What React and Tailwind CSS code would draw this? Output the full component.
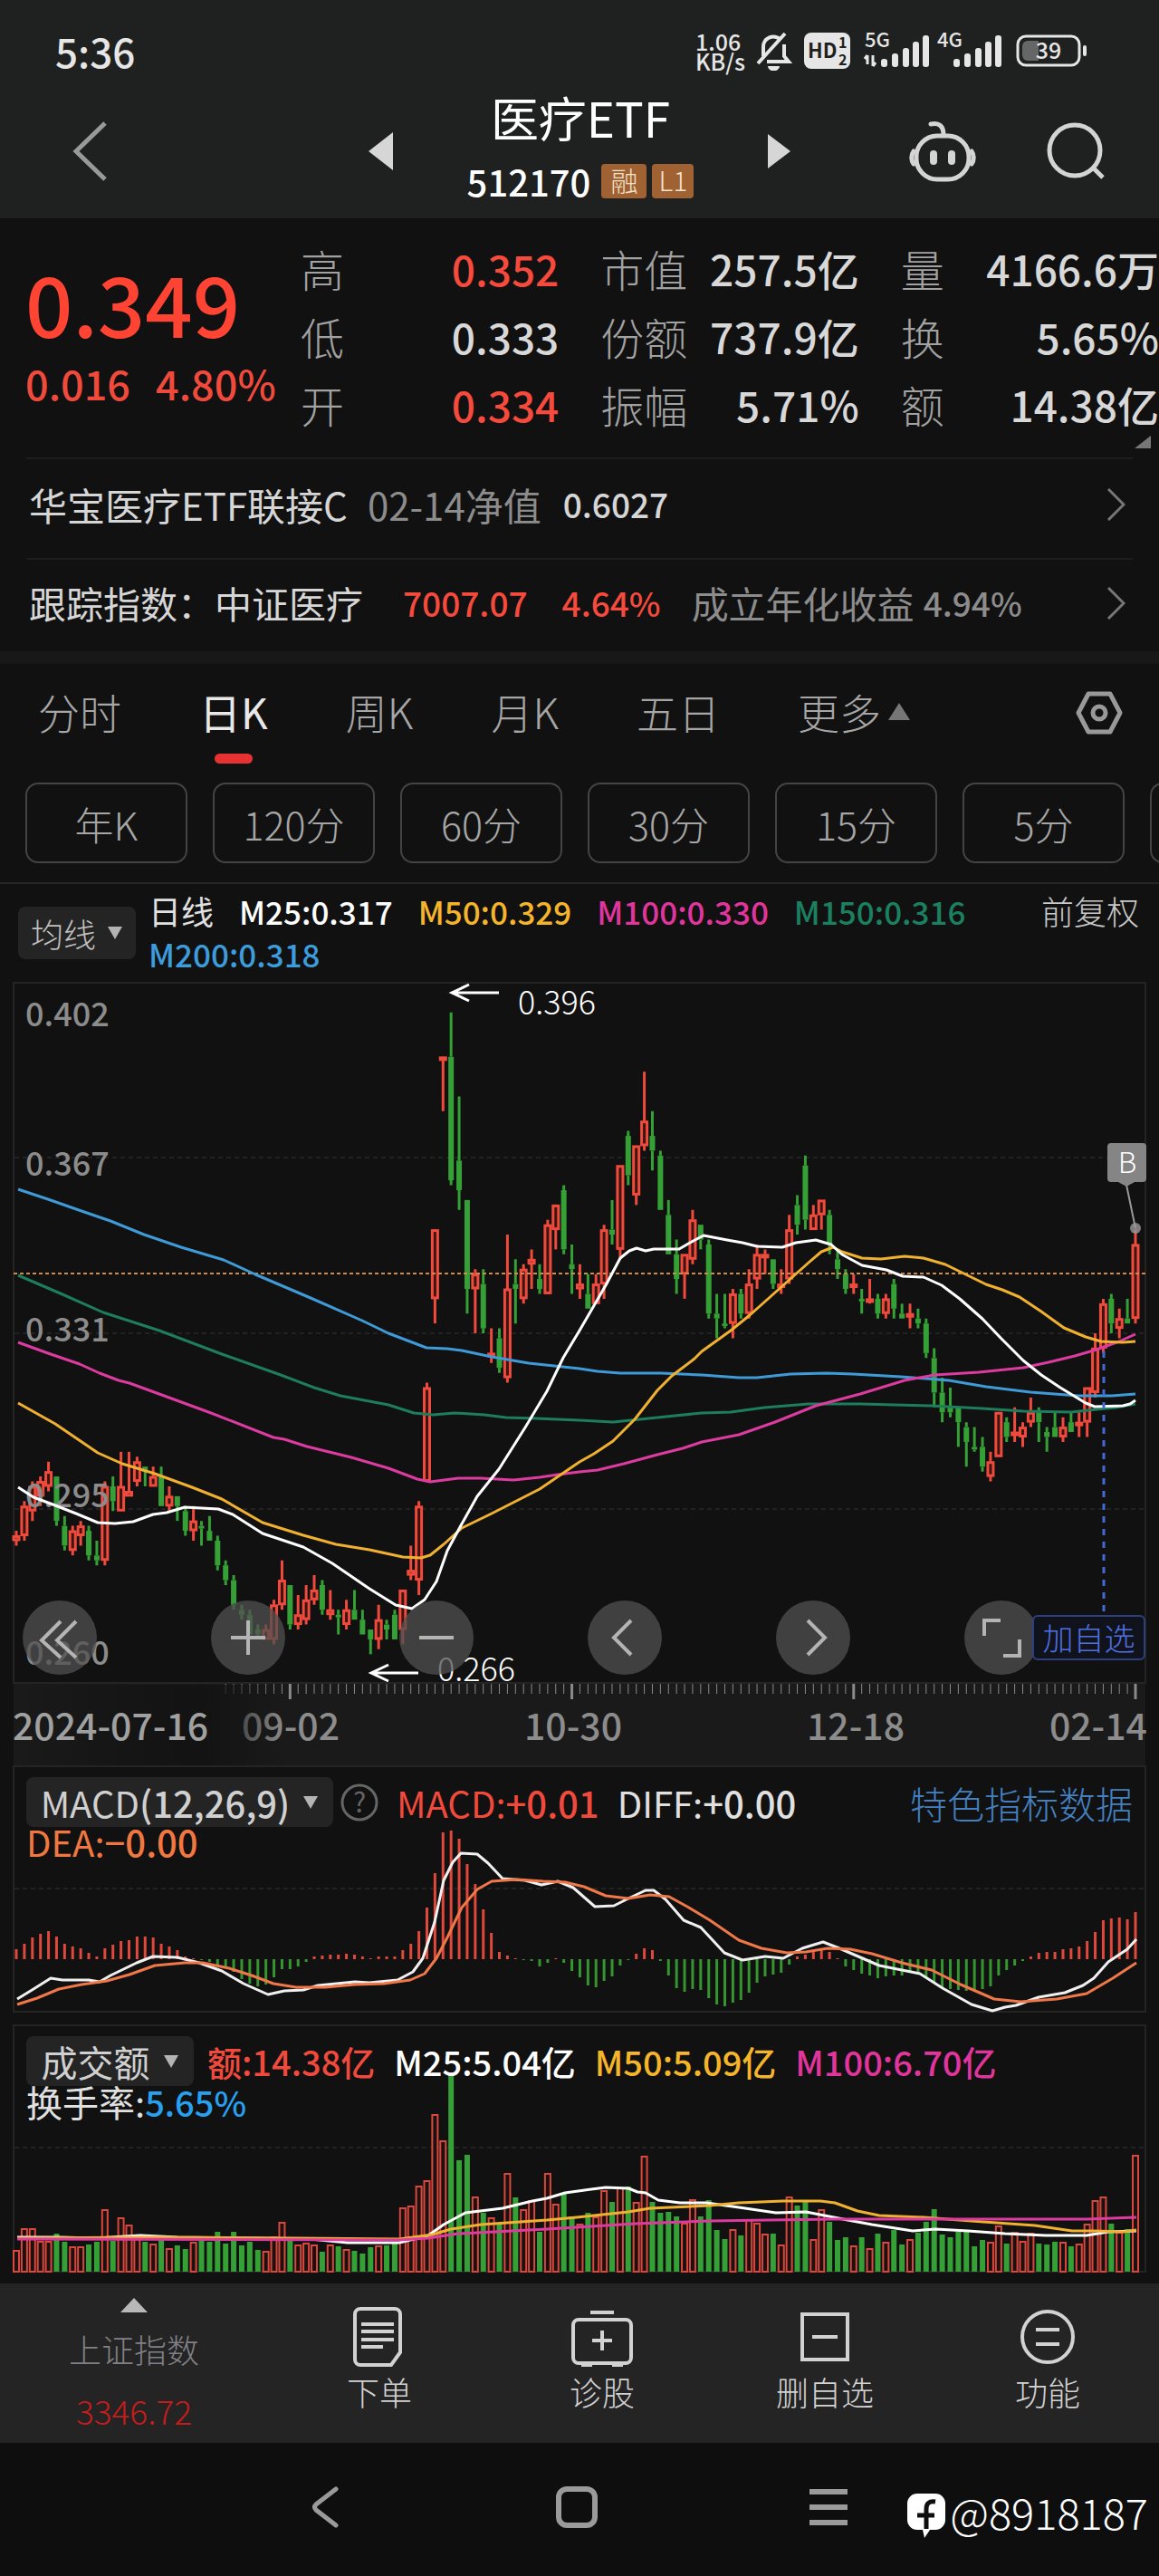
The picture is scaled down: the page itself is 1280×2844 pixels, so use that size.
const RED = '#f04a3c';
const GREEN = '#35a035';

const STEP = 1236 / 139;
const FIRST_X = 18;
const xOf = (i) => FIRST_X + i * STEP;

// price in 1/1000, top of the chart is 402
const yOf = (p) => (402.2 - p) * 5.45;

// [high, bodyTop, bodyBottom, low, up?]
const candles = [
  [291, 290, 289, 288, 1], [297, 296, 290, 289, 1], [301, 300, 295, 293, 1], [302, 301, 298, 296, 1], [305, 303, 300, 299, 1],
  [302, 302, 293, 292, 0], [294, 292, 288, 287, 0], [292, 291, 287, 286, 1], [293, 292, 290, 288, 1], [292, 291, 286, 285, 0],
  [289, 286, 285, 284, 0], [301, 300, 285, 284, 1], [302, 300, 297, 295, 0], [307, 300, 295, 295, 1], [307, 299, 298, 298, 1],
  [306, 305, 301, 300, 1], [304, 304, 303, 300, 0], [304, 302, 300, 300, 1], [304, 302, 296, 296, 0], [300, 298, 296, 295, 1],
  [298, 298, 296, 293, 0], [296, 295, 291, 290, 0], [296, 293, 291, 289, 1], [293, 292, 292, 288, 0], [294, 291, 289, 289, 0],
  [290, 289, 284, 283, 0], [285, 284, 281, 280, 0], [282, 281, 276, 275, 0], [276, 275, 274, 273, 0], [275, 274, 270, 270, 0],
  [272, 271, 270, 269, 0], [272, 271, 269, 269, 1], [277, 276, 269, 268, 1], [285, 281, 276, 275, 1], [280, 280, 272, 271, 0],
  [278, 274, 272, 271, 1], [280, 277, 273, 272, 1], [282, 279, 277, 276, 1], [281, 280, 275, 274, 0], [279, 275, 274, 273, 1],
  [275, 274, 274, 270, 0], [277, 275, 272, 271, 1], [279, 275, 273, 273, 0], [275, 273, 270, 270, 0], [271, 271, 269, 266, 0],
  [276, 273, 269, 267, 1], [273, 272, 271, 269, 0], [275, 274, 269, 269, 0], [279, 279, 271, 268, 1], [288, 283, 282, 281, 1],
  [297, 296, 281, 278, 1], [321, 320, 301, 301, 1], [352, 352, 338, 333, 1], [387, 387, 387, 376, 1], [396, 387, 362, 361, 0],
  [379, 366, 360, 356, 0], [358, 358, 340, 335, 0], [344, 343, 340, 331, 1], [344, 341, 332, 331, 0], [332, 327, 327, 325, 1],
  [332, 330, 324, 323, 0], [351, 340, 322, 321, 1], [346, 341, 340, 333, 0], [345, 344, 338, 337, 1], [348, 346, 345, 340, 1],
  [345, 342, 340, 339, 0], [354, 353, 339, 339, 1], [357, 357, 352, 348, 1], [361, 360, 348, 347, 0], [349, 345, 344, 339, 0],
  [345, 341, 340, 338, 1], [343, 339, 336, 336, 0], [343, 341, 337, 337, 1], [353, 352, 341, 338, 1], [358, 352, 351, 349, 0],
  [365, 365, 348, 346, 1], [372, 371, 363, 361, 0], [369, 369, 359, 357, 1], [384, 374, 369, 368, 1], [376, 371, 368, 364, 0],
  [368, 367, 356, 356, 0], [358, 355, 347, 347, 0], [350, 347, 342, 339, 0], [347, 347, 343, 338, 1], [356, 354, 346, 345, 1],
  [353, 353, 350, 348, 0], [350, 349, 335, 334, 0], [339, 335, 334, 330, 0], [339, 333, 333, 332, 0], [340, 339, 333, 330, 1],
  [340, 339, 335, 334, 0], [344, 341, 335, 334, 1], [349, 347, 342, 340, 1], [348, 347, 347, 343, 1], [346, 346, 341, 340, 0],
  [344, 341, 341, 339, 1], [355, 352, 342, 341, 1], [359, 357, 353, 351, 0], [367, 365, 354, 352, 0], [357, 355, 352, 352, 1],
  [358, 358, 355, 352, 1], [356, 355, 349, 347, 0], [348, 346, 344, 342, 0], [344, 343, 340, 339, 0], [343, 341, 341, 339, 1],
  [340, 338, 338, 335, 0], [342, 338, 338, 337, 1], [339, 338, 335, 334, 0], [339, 338, 335, 334, 1], [342, 341, 336, 334, 0],
  [337, 335, 334, 334, 0], [337, 335, 335, 332, 1], [336, 334, 333, 332, 0], [334, 333, 327, 326, 0], [328, 326, 319, 316, 0],
  [322, 319, 315, 313, 0], [320, 316, 315, 314, 0], [316, 316, 313, 308, 0], [313, 312, 309, 304, 0], [312, 308, 308, 307, 0],
  [310, 308, 304, 303, 0], [307, 305, 302, 301, 1], [315, 315, 306, 306, 1], [314, 313, 310, 309, 0], [316, 311, 311, 309, 1],
  [313, 312, 310, 308, 1], [318, 315, 313, 312, 1], [316, 315, 313, 309, 0], [312, 311, 310, 307, 0], [315, 312, 310, 310, 0],
  [314, 312, 310, 309, 1], [315, 313, 311, 311, 0], [315, 313, 313, 310, 1], [320, 320, 313, 310, 1], [331, 328, 319, 318, 1],
  [338, 337, 328, 327, 1], [339, 338, 333, 331, 0], [336, 334, 332, 330, 1], [338, 334, 333, 333, 0], [352, 349, 334, 333, 1],
];

const macdBars = [
  11, 17, 24, 28, 31, 25, 17, 14, 12, 7, 3, 12, 16, 20, 21, 25, 25, 24, 17, 14, 10, 3, 1, -1, -3, -6, -9, -14, -22, -27,
  -30, -28, -20, -11, -11, -8, -3, 3, 4, 5, 5, 6, 5, 3, 1, 3, 3, 3, 10, 17, 31, 57, 95, 140, 142, 133, 105, 83, 55, 29,
  8, 4, 1, -1, -2, -8, -4, 1, -4, -13, -20, -29, -31, -24, -19, -7, -1, 6, 12, 10, -2, -18, -32, -36, -33, -34, -43, -50, -52, -48,
  -45, -37, -26, -19, -17, -15, -6, 3, 5, 8, 10, 8, 1, -8, -12, -16, -18, -21, -19, -18, -18, -15, -17, -20, -27, -32, -33, -34, -35, -34,
  -33, -30, -18, -12, -7, -2, 3, 7, 8, 8, 11, 12, 14, 20, 30, 43, 45, 46, 44, 52,
];

const volumes = [
  24, 48, 48, 34, 34, 42, 33, 28, 28, 30, 33, 69, 34, 60, 52, 40, 33, 31, 35, 26, 29, 25, 33, 35, 33, 44, 31, 44, 29, 33,
  24, 23, 39, 55, 34, 30, 32, 30, 22, 30, 28, 25, 23, 20, 27, 29, 29, 33, 71, 73, 95, 101, 174, 145, 217, 123, 129, 83, 65, 60,
  54, 109, 82, 69, 79, 44, 109, 75, 86, 61, 53, 65, 61, 90, 77, 93, 94, 77, 128, 77, 65, 66, 61, 54, 80, 61, 79, 46, 36, 47,
  40, 58, 54, 42, 42, 30, 83, 73, 79, 36, 69, 55, 35, 38, 29, 38, 26, 42, 33, 46, 30, 36, 43, 55, 69, 41, 38, 44, 46, 28,
  35, 33, 51, 31, 44, 34, 43, 31, 30, 33, 33, 28, 31, 53, 79, 83, 53, 44, 47, 129,
];

const maLines = [
  ['#3f9bd8', '20,229 53,240 90,253 122,264 159,279 200,293 247,307 282,323 343,349 400,374 429,388 471,404 494,405 510,407 543,414 584,421 640,427 660,430 685,432 730,432 775,434 816,437 836,437 873,433 913,432 942,433 995,436 1048,440 1089,447 1138,453 1191,457 1228,457 1254,455'],
  ['#1d7d5c', '20,324 69,345 114,365 176,385 245,411 310,434 347,448 376,457 429,467 457,476 478,478 502,476 535,478 559,481 592,482 640,484 677,486 726,481 775,476 807,475 844,470 893,466 950,466 987,467 1028,468 1085,471 1130,474 1183,475 1211,472 1232,470 1254,466'],
  ['#dc3ba0', '20,398 53,410 88,422 110,432 131,440 143,443 184,458 233,476 302,503 314,505 339,513 388,525 429,537 461,549 475,552 506,548 531,548 567,550 596,547 616,544 640,541 660,539 689,532 726,522 754,515 775,508 816,500 856,486 901,468 950,455 999,440 1032,434 1081,431 1130,426 1158,420 1187,413 1211,406 1236,397 1254,389'],
  ['#f0b030', '20,465 61,488 108,520 135,532 171,543 212,558 245,571 290,597 335,611 371,621 408,627 445,635 465,636 475,633 490,621 510,603 543,587 596,560 640,530 656,521 677,507 701,483 726,451 742,435 767,416 775,408 807,385 828,368 856,343 893,310 907,298 920,293 930,298 952,305 973,306 999,303 1020,305 1044,312 1089,334 1107,340 1126,348 1150,364 1175,382 1199,392 1216,397 1240,398 1254,397'],
  ['#ffffff', '20,558 37,569 61,578 84,587 108,597 127,598 147,596 169,588 184,586 204,580 241,582 257,588 290,609 335,624 367,642 408,670 437,688 455,692 469,682 482,662 494,628 508,602 527,568 551,538 580,492 604,452 622,415 640,385 669,335 685,305 695,297 703,294 713,297 722,295 750,295 762,288 777,280 803,285 820,288 836,292 864,293 879,288 901,285 918,290 930,301 952,313 979,318 997,325 1020,326 1040,335 1060,350 1085,372 1105,393 1130,418 1150,434 1171,448 1199,465 1209,469 1240,468 1248,466 1254,462'],
];

const macdLines = [
  ['#f0f0f0', '19,258 37,247 56,235 69,237 98,237 110,239 122,232 151,218 169,211 196,212 220,218 245,227 269,241 296,253 314,249 335,248 351,243 392,239 408,240 439,237 456,228 467,213 480,173 490,127 500,107 509,97 527,98 539,108 555,125 580,127 598,132 616,128 633,135 657,156 678,155 694,147 713,138 722,138 735,148 755,171 774,179 800,207 820,215 845,211 865,213 886,202 909,195 927,202 971,221 1016,230 1041,246 1073,264 1096,271 1110,267 1122,265 1147,256 1176,251 1196,243 1208,235 1224,217 1245,203 1255,192'],
  ['#f07848', '19,264 41,257 65,247 90,242 118,238 143,231 171,221 204,218 224,218 253,224 278,232 302,241 327,245 359,245 392,242 424,241 453,237 469,230 482,213 494,190 510,157 527,137 543,128 571,126 600,128 624,129 645,134 669,144 694,147 718,143 739,145 759,156 784,171 816,193 841,202 869,207 890,206 914,202 939,203 963,208 996,218 1029,226 1061,242 1098,258 1127,261 1167,258 1200,252 1229,235 1255,218'],
];

const volumeLines = [
  ['#ffffff', '19,235 65,235 106,236 155,233 196,235 343,237 384,241 441,241 473,233 490,221 514,208 555,203 588,195 604,192 624,186 653,182 669,180 694,181 704,185 713,186 727,194 751,197 780,197 816,202 857,208 890,207 931,215 963,221 1008,228 1033,226 1069,228 1110,231 1155,233 1200,233 1224,229 1255,228'],
  ['#f0b030', '19,236 163,235 327,236 441,237 478,232 498,226 531,221 604,216 637,213 694,207 718,203 784,200 816,197 865,195 906,195 922,197 947,206 971,211 1020,213 1086,218 1143,222 1184,228 1208,228 1241,229 1255,227'],
  ['#dc3ba0', '19,237 441,238 473,236 506,231 604,226 653,223 702,220 784,217 849,216 922,215 1200,215 1255,213'],
];

const quotes = [
  ['高', '0.352', 'text-[#f54a3c]'], ['市值', '257.5亿', 'text-[#d8d8d8]'], ['量', '4166.6万', 'text-[#d8d8d8]'],
  ['低', '0.333', 'text-[#d8d8d8]'], ['份额', '737.9亿', 'text-[#d8d8d8]'], ['换', '5.65%', 'text-[#d8d8d8]'],
  ['开', '0.334', 'text-[#f54a3c]'], ['振幅', '5.71%', 'text-[#d8d8d8]'], ['额', '14.38亿', 'text-[#d8d8d8]'],
];

const tabs = ['分时', '日K', '周K', '月K', '五日'];
const periods = ['年K', '120分', '60分', '30分', '15分', '5分', '1分'];

const Lines = ({ data }) =>
  data.map(([color, points]) => (
    <polyline key={color} points={points} fill="none" stroke={color} strokeWidth="3" strokeLinejoin="round" />
  ));

const Caret = ({ className = '' }) => (
  <svg className={`w-[18px] h-[14px] ${className}`} viewBox="0 0 18 14"><path d="M1 0h16L9 14z" fill="#b4b4b4" /></svg>
);

const RightChevron = () => (
  <svg className="w-[21px] h-[36px] ml-auto" viewBox="0 0 21 36" fill="none" stroke="#777" strokeWidth="3"><path d="M2 1l17 17L2 35" /></svg>
);

const Signal = ({ label, arrows }) => (
  <svg className="w-[72px] h-[42px] overflow-visible" viewBox="0 0 72 42" fill="#e6e6e6">
    <text x="0" y="17" fontSize="22" fontWeight="500">{label}</text>
    {arrows && <path d="M3 26v10M3 26l-3 4M9 38V26M9 38l3-4" stroke="#e6e6e6" strokeWidth="3" fill="none" />}
    <rect x="18" y="30" width="7" height="9" rx="3" />
    <rect x="30" y="24" width="7" height="15" rx="3" />
    <rect x="42" y="18" width="7" height="21" rx="3" />
    <rect x="53" y="11" width="7" height="28" rx="3" />
    <rect x="64" y="4" width="7" height="35" rx="3" />
  </svg>
);

const StatusBar = () => (
  <div className="h-[96px] pt-[16px] pl-[61px] pr-[80px] flex items-center justify-between text-[#e6e6e6]">
    <span className="text-[44px] leading-[60px] font-medium">5:36</span>
    <div className="flex items-center">
      <span className="text-[25px] leading-[22px] font-medium mr-[10px]">1.06<br />KB/s</span>
      <svg className="w-[42px] h-[44px] mr-[13px]" viewBox="0 0 42 44" fill="none" stroke="#e6e6e6" strokeWidth="4">
        <path d="M10 28V18a11 11 0 0 1 19-8M33 15v13l5 6H14M4 36L34 3" />
        <path d="M15 39h13a6 5 0 0 1-13 0z" fill="#e6e6e6" stroke="none" />
      </svg>
      <svg className="w-[51px] h-[40px] mr-[16px] overflow-visible" viewBox="0 0 51 40">
        <rect width="51" height="40" rx="8" fill="#e6e6e6" />
        <text x="4" y="28" fontSize="22" fontWeight="700" fill="#1f2120">HD</text>
        <text x="38" y="17" fontSize="16" fontWeight="700" fill="#1f2120">1</text>
        <text x="38" y="36" fontSize="16" fontWeight="700" fill="#1f2120">2</text>
      </svg>
      <Signal label="5G" arrows />
      <span className="w-[8px]" />
      <Signal label="4G" />
      <svg className="w-[78px] h-[36px] ml-[15px]" viewBox="0 0 78 36">
        <rect x="2" y="2" width="68" height="32" rx="9" fill="none" stroke="#e6e6e6" strokeWidth="3" />
        <path d="M13 7h12v22H13a6 6 0 0 1-6-6V13a6 6 0 0 1 6-6z" fill="#666" />
        <rect x="74" y="12" width="4" height="12" rx="2" fill="#e6e6e6" />
        <text x="36" y="27" fontSize="25" fontWeight="500" textAnchor="middle" fill="#e6e6e6">39</text>
      </svg>
    </div>
  </div>
);

const Header = () => (
  <header className="bg-[#1f2120]">
    <StatusBar />
    <div className="h-[145px] grid grid-cols-[1fr_466px_1fr] items-center pb-[3px]">
      <div className="pl-[80px] flex">
        <button aria-label="返回">
          <svg className="w-[38px] h-[66px]" viewBox="0 0 38 66" fill="none" stroke="#999" strokeWidth="5"><path d="M36 2L4 33l32 31" /></svg>
        </button>
      </div>
      <div className="flex items-center justify-between">
        <button aria-label="上一只">
          <svg className="w-[27px] h-[42px]" viewBox="0 0 27 42"><path d="M27 0v42L0 21z" fill="#d6d6d6" /></svg>
        </button>
        <div className="text-center text-white">
          <h1 className="text-[53px] leading-[66px]">医疗ETF</h1>
          <div className="flex items-center justify-center gap-[6px] h-[76px]">
            <span className="text-[40px] leading-[72px] font-medium mr-[6px]">512170</span>
            <span className="w-[50px] h-[38px] rounded-[4px] bg-[#a06232] text-[30px] leading-[34px] text-[#f6e3cc] font-light">融</span>
            <span className="w-[46px] h-[38px] rounded-[4px] bg-[#a06232] text-[30px] leading-[34px] text-[#f6e3cc] font-light">L1</span>
          </div>
        </div>
        <button aria-label="下一只">
          <svg className="w-[25px] h-[38px]" viewBox="0 0 25 38"><path d="M0 0v38l25-19z" fill="#d6d6d6" /></svg>
        </button>
      </div>
      <div className="flex items-center justify-end gap-[78px] pr-[60px]">
        <button aria-label="智能助手">
          <svg className="w-[74px] h-[68px]" viewBox="0 0 74 68" fill="none" stroke="#d4d4d4" strokeWidth="5" strokeLinecap="round">
            <path d="M24 4c9-2 14 2 14 12" />
            <rect x="8" y="17" width="58" height="48" rx="23" />
            <path d="M5 34c-3 4-3 10 0 14M69 34c3 4 3 10 0 14" />
            <path d="M27 37v8M47 37v8" strokeWidth="8" />
          </svg>
        </button>
        <button aria-label="搜索">
          <svg className="w-[64px] h-[64px]" viewBox="0 0 64 64" fill="none" stroke="#d4d4d4" strokeWidth="5"><circle cx="31" cy="31" r="28" /><path d="M50 49l12 12" /></svg>
        </button>
      </div>
    </div>
  </header>
);

const Quote = () => (
  <section className="relative h-[264px] flex pt-[18px]">
    <div className="w-[332px] pl-[28px] text-[#ff4433] font-medium">
      <div className="text-[92px] leading-[112px] pt-[18px]">0.349</div>
      <div className="text-[45px] leading-[68px] flex gap-[28px] text-[#f04a3c]"><span>0.016</span><span>4.80%</span></div>
    </div>
    <dl className="flex-1 grid grid-cols-3 gap-x-[46px] auto-rows-[75px] leading-[75px]">
      {quotes.map(([label, value, color]) => (
        <div key={label} className="flex justify-between whitespace-nowrap">
          <dt className="text-[48px] font-light text-[#a2a2a2]">{label}</dt>
          <dd className={`text-[46px] font-medium ${color}`}>{value}</dd>
        </div>
      ))}
    </dl>
    <svg className="absolute right-[9px] bottom-[10px] w-[18px] h-[14px]" viewBox="0 0 18 14"><path d="M18 0v14H0z" fill="#777" /></svg>
  </section>
);

const FundRows = () => (
  <section className="border-b-[14px] border-[#181818] px-[29px]">
    <a href="#fund" className="h-[111px] border-t-2 border-[#1e1e1e] flex items-center pl-[3px] pr-[8px] pb-[10px] text-[42px] text-[#d6d6d6]">
      <span>华宝医疗ETF联接C</span>
      <span className="ml-[22px] text-[#8c8c8c]">02-14净值</span>
      <span className="ml-[24px] text-[37px] font-medium">0.6027</span>
      <RightChevron />
    </a>
    <a href="#index" className="h-[103px] border-t-2 border-[#1e1e1e] flex items-center pl-[3px] pr-[8px] pb-[6px] text-[41px] text-[#d6d6d6]">
      <span>跟踪指数：中证医疗</span>
      <span className="ml-[44px] text-[37px] text-[#f54a3c] font-medium">7007.07</span>
      <span className="ml-[38px] text-[37px] text-[#f54a3c] font-medium">4.64%</span>
      <span className="ml-[34px] text-[#8c8c8c]">成立年化收益</span>
      <span className="ml-[10px] text-[37px] text-[#8c8c8c] font-medium">4.94%</span>
      <RightChevron />
    </a>
  </section>
);

const Tabs = () => (
  <nav className="border-b-2 border-[#262626] pb-[21px]">
    <div className="h-[131px] flex items-start pt-[14px] pl-[42px] pr-[40px] gap-[86px] text-[46px] leading-[76px] text-[#a6a6a6]">
      {tabs.map((tab) => (
        <button key={tab} className={tab === '日K' ? 'text-[#e8e8e8] flex flex-col items-center' : 'font-light'}>
          {tab}
          {tab === '日K' && <span className="w-[42px] h-[11px] mt-[9px] rounded-full bg-[#e83232]" />}
        </button>
      ))}
      <button className="flex items-center gap-[8px] font-light">
        更多
        <svg className="w-[24px] h-[20px]" viewBox="0 0 24 20"><path d="M12 1L0 20h24z" fill="#777" /></svg>
      </button>
      <button aria-label="设置" className="ml-auto mt-[16px]">
        <svg className="w-[52px] h-[48px]" viewBox="0 0 52 48" fill="none" stroke="#999" strokeWidth="5"><path d="M14 3h24l11 21-11 21H14L3 24z" strokeLinejoin="round" /><circle cx="26" cy="24" r="7" /></svg>
      </button>
    </div>
    <div className="flex gap-[28px] pl-[28px] overflow-hidden">
      {periods.map((p) => (
        <button key={p} className="w-[179px] h-[89px] shrink-0 border-2 border-[#444] rounded-[14px] text-[43px] leading-[80px] font-light text-[#a6a6a6]">{p}</button>
      ))}
    </div>
  </nav>
);

const MaLegend = () => (
  <div className="h-[108px] flex items-start pl-[20px] pr-[22px] text-[35px] leading-[47px] font-medium">
    <button className="w-[130px] h-[58px] mt-[25px] shrink-0 rounded-[8px] bg-[#242424] text-[#c0c0c0] text-[36px] flex items-center justify-center gap-[12px] font-light">
      均线<Caret />
    </button>
    <div className="flex-1 flex flex-wrap gap-x-[28px] pl-[14px] pr-[30px] pt-[6px] whitespace-nowrap">
      <span className="text-[36px] text-[#e0e0e0] font-normal">日线</span>
      <span className="text-white">M25:0.317</span>
      <span className="text-[#f5b52b]">M50:0.329</span>
      <span className="text-[#e0359c]">M100:0.330</span>
      <span className="text-[#1a8060]">M150:0.316</span>
      <span className="text-[#3c9cdc]">M200:0.318</span>
    </div>
    <button className="text-[36px] text-[#c8c8c8] font-light pt-[6px]">前复权</button>
  </div>
);

const gridLine = (y) => <line key={y} x1="16" x2="1265" y1={y} y2={y} stroke="#222222" strokeWidth="2" strokeDasharray="5 4" />;

const yLabels = [['0.402', 49], ['0.367', 214], ['0.331', 397], ['0.295', 580], ['0.260', 754]];

const toolIcons = [
  ['最早', 'M42 23L21 44l21 19M59 23L38 44l21 19'],
  ['放大', 'M41 22v38M22 41h38'],
  ['缩小', 'M22 41h38'],
  ['左移', 'M48 22L29 41l19 19'],
  ['右移', 'M35 22l19 19-19 19'],
  ['全屏', 'M22 39V22h18M61 43v18H43'],
];

const PriceChart = () => (
  <section className="relative">
    <svg className="block w-full" viewBox="0 0 1280 865">
      <defs>
        <linearGradient id="axisFade" x1="0" x2="1" y1="0" y2="0">
          <stop offset="0" stopColor="#1a1a1a" />
          <stop offset="0.5" stopColor="#141414" />
          <stop offset="0.7" stopColor="#131313" />
          <stop offset="1" stopColor="#131313" stopOpacity="0" />
        </linearGradient>
      </defs>
      <rect x="15" y="775" width="1250" height="90" fill="#1a1a1a" />
      <rect x="15" y="1" width="1250" height="773" fill="none" stroke="#242424" strokeWidth="2" />
      {[194, 388, 582].map(gridLine)}
      {candles.map(([high, top, bottom, low, up], i) => {
        const x = xOf(i);
        const h = Math.max((top - bottom) * 5.45, 3);
        return (
          <g key={i} stroke={up ? RED : GREEN}>
            <path d={`M${x} ${yOf(high)}V${yOf(top)}M${x} ${yOf(top) + h}V${Math.max(yOf(low), yOf(top) + h)}`} strokeWidth="3" />
            {up ? (
              <rect x={x - 3} y={yOf(top) + 1} width="6" height={Math.max(h - 2, 2)} strokeWidth="3" fill="#3a1512" />
            ) : (
              <rect x={x - 3} y={yOf(top)} width="6" height={h} fill={GREEN} stroke="none" />
            )}
          </g>
        );
      })}
      <g fontSize="36" fontWeight="500" fill="#8c8c8c">
        {yLabels.map(([t, y]) => <text key={t} x="28" y={y}>{t}</text>)}
      </g>
      <line x1="15" x2="1265" y1="322" y2="322" stroke="#d08a4c" strokeWidth="2" strokeDasharray="4 3" />
      <Lines data={maLines} />
      <line x1="1219" x2="1219" y1="408" y2="700" stroke="#4468d8" strokeWidth="3" strokeDasharray="7 7" />
      <path d="M551 12h-51M518 3l-19 9 19 9M462 763h-51M429 754l-19 9 19 9" stroke="#fff" strokeWidth="3" fill="none" />
      <g fontSize="36" fontWeight="300" fill="#fff">
        <text x="572" y="36">0.396</text>
        <text x="483" y="772">0.266</text>
      </g>
      <path d="M1244 224l10 48" stroke="#999" strokeWidth="2" />
      <circle cx="1254" cy="272" r="6" fill="#999" fillOpacity="0.8" />
      <path d="M1227 178h35a4 4 0 0 1 4 4v35a4 4 0 0 1-4 4h-9l-9 5-9-5h-8a4 4 0 0 1-4-4v-35a4 4 0 0 1 4-4z" fill="#858585" />
      <text x="1245" y="211" fontSize="32" fontWeight="300" textAnchor="middle" fill="#fff">B</text>
      {candles.map((_, i) => i > 25 && (
        <line key={i} x1={xOf(i)} x2={xOf(i)} y1="775" y2={(i - 34) % 35 ? 786 : 792} stroke="#8a8a8a" strokeWidth={(i - 34) % 35 ? 1 : 3} />
      ))}
      <g fontSize="41" fontWeight="500" fill="#8c8c8c">
        <text x="321" y="837" textAnchor="middle">09-02</text>
        <rect x="15" y="776" width="300" height="89" fill="url(#axisFade)" />
        <text x="14" y="837" fill="#a0a0a0">2024-07-16</text>
        <text x="633" y="837" textAnchor="middle">10-30</text>
        <text x="945" y="837" textAnchor="middle">12-18</text>
        <text x="1267" y="837" textAnchor="end">02-14</text>
      </g>
    </svg>
    <div className="absolute left-[25px] top-[683px] flex gap-[126px]">
      {toolIcons.map(([label, d]) => (
        <button key={label} aria-label={label} className="w-[82px] h-[82px] rounded-full bg-[#505050]/75">
          <svg viewBox="0 0 82 82" fill="none" stroke="#b4b4b4" strokeWidth="4"><path d={d} /></svg>
        </button>
      ))}
    </div>
    <button className="absolute right-[15px] top-[699px] w-[125px] h-[50px] rounded-[6px] border-2 border-[#2c4080] bg-[#10131c] text-[34px] leading-[40px] font-light text-[#5070e0]">加自选</button>
  </section>
);

const Macd = () => (
  <section className="grid">
    <svg className="col-start-1 row-start-1 block w-full" viewBox="0 0 1280 273">
      <rect x="15" y="1" width="1250" height="271" fill="none" stroke="#242424" strokeWidth="2" />
      {gridLine(136)}
      {macdBars.map((v, i) => (
        <line key={i} x1={xOf(i)} x2={xOf(i)} y1="214" y2={214 - v} stroke={v > 0 ? '#e0483c' : '#35962f'} strokeWidth="3" />
      ))}
      <Lines data={macdLines} />
    </svg>
    <div className="col-start-1 row-start-1 self-start pl-[29px] pr-[29px] pt-[13px] text-[40px] leading-[52px]">
      <div className="flex items-center h-[55px]">
        <button className="w-[339px] h-[55px] rounded-[8px] bg-[#242424] text-[#d0d0d0] flex items-center justify-center gap-[14px]">
          <span>MACD<span className="font-medium">(12,26,9)</span></span><Caret />
        </button>
        <svg className="w-[42px] h-[42px] ml-[8px]" viewBox="0 0 42 42">
          <circle cx="21" cy="21" r="19" fill="none" stroke="#666" strokeWidth="3" />
          <text x="21" y="32" fontSize="30" textAnchor="middle" fill="#666">?</text>
        </svg>
        <span className="ml-[20px] text-[#f04a3c]">MACD:<span className="font-medium">+0.01</span></span>
        <span className="ml-[20px] text-[#e0e0e0]">DIFF:<span className="font-medium">+0.00</span></span>
        <a href="#indicators" className="ml-auto text-[41px] font-light text-[#4480c0]">特色指标数据</a>
      </div>
      <div className="leading-[32px] text-[#f07840]">DEA:<span className="font-medium">−0.00</span></div>
    </div>
  </section>
);

const Volume = () => (
  <section className="grid mt-[13px] pb-[12px]">
    <svg className="col-start-1 row-start-1 block w-full" viewBox="0 0 1280 274">
      <rect x="15" y="1" width="1250" height="272" fill="none" stroke="#242424" strokeWidth="2" />
      {gridLine(136)}
      {volumes.map((v, i) =>
        candles[i][4] ? (
          <rect key={i} x={xOf(i) - 3} y={274 - v} width="6" height={v - 1} fill="#1c1010" stroke="#d8493d" strokeWidth="2" />
        ) : (
          <rect key={i} x={xOf(i) - 3} y={273 - v} width="6" height={v} fill={GREEN} />
        )
      )}
      <Lines data={volumeLines} />
    </svg>
    <div className="col-start-1 row-start-1 self-start pl-[29px] pt-[13px] text-[38px] leading-[52px] font-medium">
      <div className="flex items-center h-[55px]">
        <button className="w-[185px] h-[55px] rounded-[8px] bg-[#242424] text-[40px] text-[#d0d0d0] flex items-center justify-center gap-[14px] font-normal">成交额<Caret /></button>
        <span className="ml-[15px] text-[#f04a3c]">额:14.38亿</span>
        <span className="ml-[21px] text-white">M25:5.04亿</span>
        <span className="ml-[21px] text-[#f5b52b]">M50:5.09亿</span>
        <span className="ml-[21px] text-[#e0359c]">M100:6.70亿</span>
      </div>
      <div className="leading-[34px] text-[#28a0f0]"><span className="text-[40px] text-[#e0e0e0] font-normal">换手率:</span>5.65%</div>
    </div>
  </section>
);

const ActionButton = ({ label, children }) => (
  <button className="flex flex-col items-center pt-[26px]">
    <svg className="w-[70px] h-[66px]" viewBox="0 0 70 66" fill="none" stroke="#d2d2d2" strokeWidth="4">{children}</svg>
    <span className="text-[36px] leading-[52px] mt-[1px] font-light text-[#d2d2d2]">{label}</span>
  </button>
);

const ActionBar = () => (
  <footer className="h-[176px] bg-[#242424] grid grid-cols-[296px_repeat(4,1fr)]">
    <button className="flex flex-col items-center pt-[16px] text-[36px] font-light">
      <svg className="w-[30px] h-[16px]" viewBox="0 0 30 16"><path d="M15 0L0 16h30z" fill="#b8b8b8" /></svg>
      <span className="leading-[68px] mt-[6px] text-[#808086]">上证指数</span>
      <span className="text-[37px] leading-[68px] text-[#c81c1c]">3346.72</span>
    </button>
    <ActionButton label="下单">
      <path d="M14 2h38a6 6 0 0 1 6 6v42L48 64H14a6 6 0 0 1-6-6V8a6 6 0 0 1 6-6z" />
      <path d="M15 19h36M15 27h36M15 36h36M15 44h24" />
    </ActionButton>
    <ActionButton label="诊股">
      <rect x="3" y="14" width="64" height="48" rx="6" />
      <path d="M22 6h26M35 26v22M24 37h22" />
      <path d="M12 64h12M46 64h12" strokeWidth="4" />
    </ActionButton>
    <ActionButton label="删自选">
      <rect x="10" y="8" width="50" height="50" />
      <path d="M21 33h28" />
    </ActionButton>
    <ActionButton label="功能">
      <circle cx="35" cy="33" r="28" />
      <path d="M22 25h26M22 41h26" />
    </ActionButton>
  </footer>
);

const SystemNav = () => (
  <div className="relative h-[147px] bg-[#0e0e0e] flex items-center justify-center gap-[232px] pr-[6px] pb-[6px]">
    <button aria-label="后退"><svg className="w-[46px] h-[46px]" viewBox="0 0 46 46" fill="none" stroke="#9a9a9a" strokeWidth="5" strokeLinecap="round"><path d="M35 3L13 20q-3 3 0 6l22 17" /></svg></button>
    <button aria-label="主屏幕"><svg className="w-[46px] h-[46px]" viewBox="0 0 46 46" fill="none" stroke="#9a9a9a" strokeWidth="6"><rect x="3" y="3" width="40" height="40" rx="9" /></svg></button>
    <button aria-label="最近任务"><svg className="w-[46px] h-[46px]" viewBox="0 0 46 46" stroke="#9a9a9a" strokeWidth="6"><path d="M2 6h42M2 23h42M2 40h42" /></svg></button>
    <div className="absolute right-[12px] top-[46px] flex items-center gap-[4px] text-white text-[47px] leading-[60px]">
      <svg className="w-[44px] h-[50px] mt-[8px]" viewBox="0 0 44 50">
        <path d="M12 1h20a11 11 0 0 1 11 11v18a11 11 0 0 1-11 11h-6l-6 9-2-9h-6A11 11 0 0 1 1 30V12A11 11 0 0 1 12 1z" fill="#fff" />
        <path d="M32 10c-7-1-10 2-10 8v22M12 25h19" fill="none" stroke="#0e0e0e" strokeWidth="5" />
      </svg>
      <span className="font-light">@8918187</span>
    </div>
  </div>
);

export default function App() {
  return (
    <div className="bg-[#111111] min-h-screen font-['Noto_Sans_CJK_SC',sans-serif] overflow-x-hidden">
      <Header />
      <Quote />
      <FundRows />
      <Tabs />
      <MaLegend />
      <PriceChart />
      <Macd />
      <Volume />
      <ActionBar />
      <SystemNav />
    </div>
  );
}
